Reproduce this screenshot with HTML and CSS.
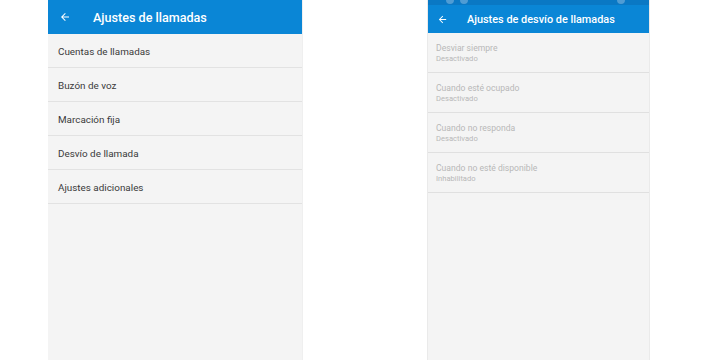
FILE: index.html
```html
<!DOCTYPE html>
<html lang="es">
<head>
<meta charset="utf-8">
<link rel="stylesheet" href="styles.css">
</head>
<body>
<div class="stage">
  <section class="phone phone-left">
    <header class="bar bar-left">
      <svg class="back" width="12" height="12" viewBox="0 0 24 24"><path d="M20 11H7.83l5.59-5.59L12 4l-8 8 8 8 1.41-1.41L7.83 13H20v-2z" fill="#fff"/></svg>
      <span class="title">Ajustes de llamadas</span>
    </header>
    <ul class="list list-left">
      <li>Cuentas de llamadas</li>
      <li>Buzón de voz</li>
      <li>Marcación fija</li>
      <li>Desvío de llamada</li>
      <li>Ajustes adicionales</li>
    </ul>
  </section>
  <section class="phone phone-right">
    <div class="status">
      <span class="dot"></span><span class="dot"></span>
      <span class="spacer"></span>
      <span class="dot"></span>
    </div>
    <header class="bar bar-right">
      <svg class="back" width="11" height="11" viewBox="0 0 24 24"><path d="M20 11H7.83l5.59-5.59L12 4l-8 8 8 8 1.41-1.41L7.83 13H20v-2z" fill="#fff"/></svg>
      <span class="title">Ajustes de desvío de llamadas</span>
    </header>
    <ul class="list list-right">
      <li><span class="primary">Desviar siempre</span><span class="secondary">Desactivado</span></li>
      <li><span class="primary">Cuando esté ocupado</span><span class="secondary">Desactivado</span></li>
      <li><span class="primary">Cuando no responda</span><span class="secondary">Desactivado</span></li>
      <li><span class="primary">Cuando no esté disponible</span><span class="secondary">Inhabilitado</span></li>
    </ul>
  </section>
</div>
</body>
</html>
```
FILE: styles.css
```css
* { box-sizing: border-box; }
html, body { margin: 0; padding: 0; background: #ffffff; }
body { font-family: Roboto, "Noto Sans", sans-serif; width: 720px; height: 360px; overflow: hidden; }
.stage { display: flex; height: 360px; padding-left: 48px; gap: 124px; }
.phone { background: #f4f4f4; height: 360px; display: flex; flex-direction: column; }
.phone-left { width: 255px; border-right: 1px solid #efefef; }
.phone-right { width: 223px; border-left: 1px solid #eaeaea; border-right: 1px solid #eaeaea; }
.bar { background: #0a86d6; color: #fff; display: flex; align-items: center; }
.bar-left { height: 34px; padding-left: 11px; }
.bar-left .back { margin-right: 22px; }
.bar-left .title { font-size: 12.6px; font-weight: 500; }
.status { height: 5px; background: #0a78c4; display: flex; align-items: flex-start; padding: 0 24px 0 18px; gap: 6px; }
.status .dot { width: 8px; height: 4px; border-radius: 0 0 4px 4px; background: #4f9cd4; }
.status .spacer { flex: 1; }
.bar-right { height: 28px; padding-left: 9px; background: #0a86d6; }
.bar-right .back { margin-right: 19px; }
.bar-right .title { font-size: 10.9px; font-weight: 500; }
.list { list-style: none; margin: 0; padding: 0; }
.list-left li { height: 34px; border-bottom: 1px solid #e2e2e2; display: flex; align-items: center; padding-left: 10px; padding-top: 2px; font-size: 9.9px; color: #3a3a3a; }
.list-right li { height: 40px; border-bottom: 1px solid #e0e0e0; display: flex; flex-direction: column; justify-content: center; padding-left: 8px; padding-top: 1px; }
.list-right .primary { font-size: 8.6px; color: #b8b8b8; line-height: 11px; }
.list-right .secondary { font-size: 7.6px; color: #b8b8b8; line-height: 10px; }
```
